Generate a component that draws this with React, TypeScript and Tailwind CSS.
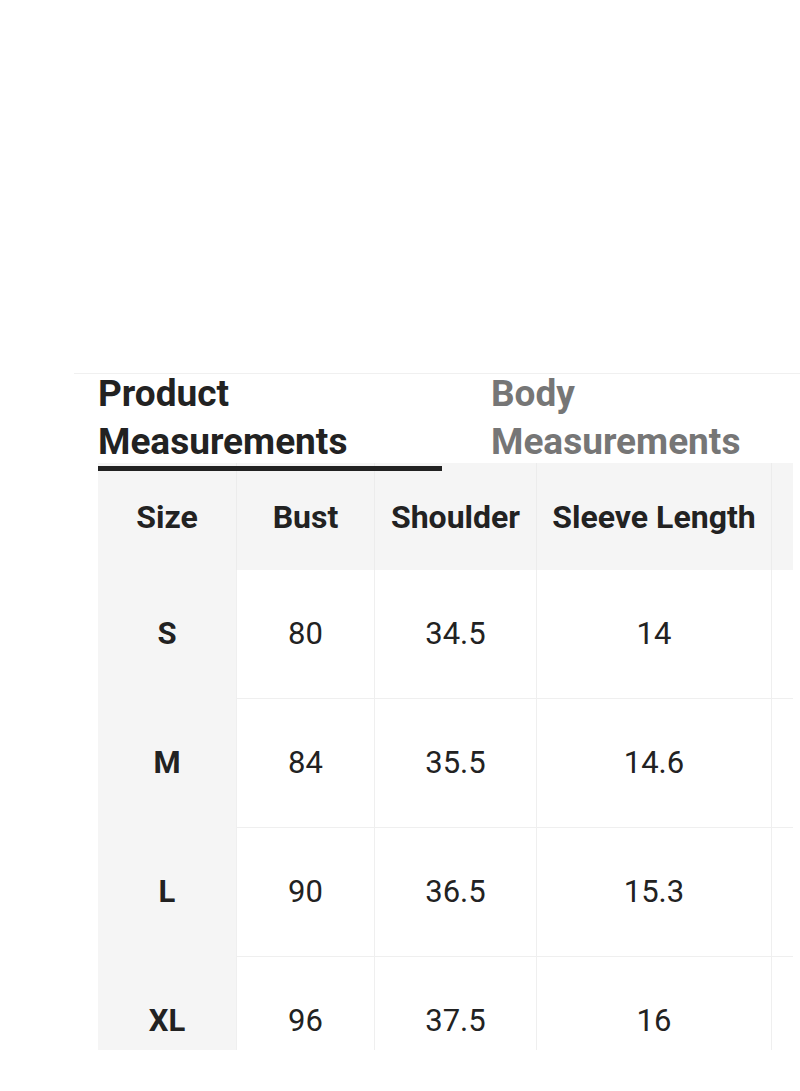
import React from "react";

const cols = [
  { key: "size", label: "Size", w: "w-[138px]" },
  { key: "bust", label: "Bust", w: "w-[138px]" },
  { key: "shoulder", label: "Shoulder", w: "w-[162px]" },
  { key: "sleeve", label: "Sleeve Length", w: "w-[235px]" },
  { key: "length", label: "", w: "w-[160px]" },
];

const rows = [
  ["S", "80", "34.5", "14", ""],
  ["M", "84", "35.5", "14.6", ""],
  ["L", "90", "36.5", "15.3", ""],
  ["XL", "96", "37.5", "16", ""],
];

export default function App() {
  return (
    <div
      className="w-[800px] h-[1091px] bg-white overflow-hidden text-[#222]"
      style={{ fontFamily: "Roboto, 'Noto Sans', Arial, sans-serif" }}
    >
      <div className="h-[373px]" />
      <div className="ml-[74px] border-t border-[#f0f0f0]">
        <div className="relative z-10 flex pl-[24px] -mt-[4px]">
          <div className="w-[344px] flex flex-col">
            <div className="text-[37px] leading-[48px] font-bold text-[#222]">
              Product
              <br />
              Measurements
            </div>
            <div className="mt-[0px] h-[5px] bg-[#222]" />
          </div>
          <div className="ml-[49px] text-[37px] leading-[48px] font-bold text-[#767676]">
            Body
            <br />
            Measurements
          </div>
        </div>
      </div>
      <div className="ml-[98px] -mt-[8px] w-[695px] h-[587px] overflow-hidden">
        <div className="flex w-max bg-[#f5f5f5]">
          {cols.map((c, i) => (
            <div
              key={c.key}
              className={`${c.w} shrink-0 h-[107px] flex items-center justify-center text-[32px] font-bold text-[#222] whitespace-nowrap ${
                i === 0 ? "" : "border-l border-[#ececec]"
              }`}
            >
              {c.label}
            </div>
          ))}
        </div>
        {rows.map((r, ri) => (
          <div key={ri} className="flex w-max">
            {r.map((v, ci) => (
              <div
                key={ci}
                className={`${cols[ci].w} shrink-0 h-[129px] flex items-center justify-center text-[31px] whitespace-nowrap ${
                  ci === 0
                    ? "bg-[#f5f5f5] font-bold text-[#222]"
                    : "bg-white font-normal text-[#222] border-l border-b border-[#efefef]"
                }`}
              >
                {v}
              </div>
            ))}
          </div>
        ))}
      </div>
    </div>
  );
}
